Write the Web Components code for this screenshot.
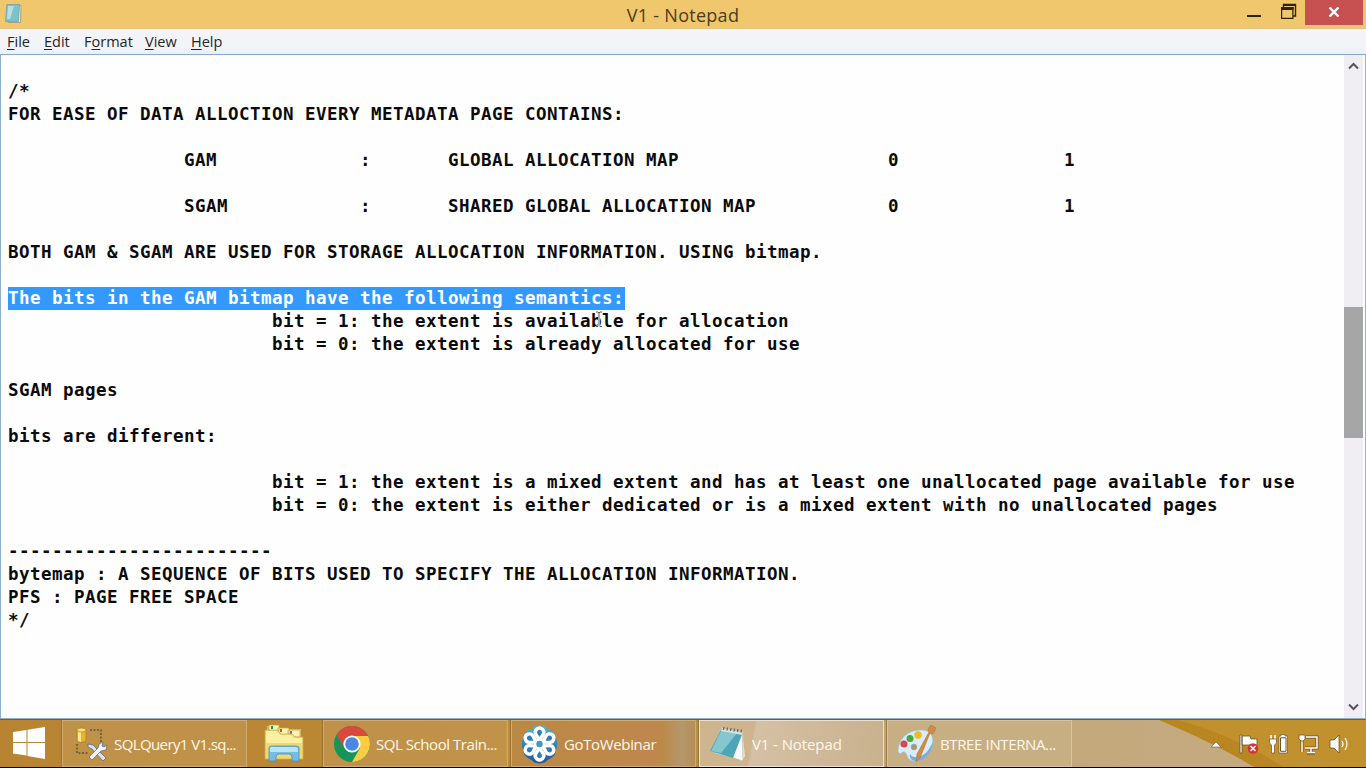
<!DOCTYPE html>
<html lang="en"><head><meta charset="utf-8"><title>V1 - Notepad</title>
<style>html,body{margin:0;height:100%;overflow:hidden;background:#000}body{font-family:"Open Sans","Noto Sans",sans-serif}</style></head>
<body>
<desktop-screen></desktop-screen>
<script>
const define=(name,html,setup)=>customElements.define(name,class extends HTMLElement{
  connectedCallback(){
    if(this.shadowRoot)return;
    this.attachShadow({mode:'open'}).innerHTML=html;
    if(setup)setup(this,this.shadowRoot);
  }
});

define('title-bar',`<style>
:host{display:grid;grid-template-columns:1fr auto 1fr;height:29px;background:#f0c76c;color:#4b3d1c;box-shadow:inset 0 -1px #e3c487}
.icon{padding:3px 0 0 3px}
.name{font-size:18px;line-height:30px;height:29px;letter-spacing:.27px;white-space:pre}
.controls{display:flex;justify-content:flex-end;padding-right:3px}
svg{display:block}
.min{width:16px;height:4px;margin:14px 18px 0 0}
.max{margin:3px 7px 0 0}
.close{width:58px;height:25px;background:#c75050}
.close svg{margin:7px auto 0}
</style>
<div class="icon"><svg width="20" height="22" viewBox="0 0 20 22"><path d="M4 2.500h14l-.5 17H5z" fill="#f4f1dd" stroke="#a5a283"/><path d="M4 1.500h12.500l-1 17H2.500z" fill="#7fc0cb" stroke="#6fa5a5" stroke-width=".8"/><path d="M5 3h6L7 16H4z" fill="#c3e6e8" opacity=".8"/></svg></div>
<div class="name"><slot></slot></div>
<div class="controls">
<svg class="min" viewBox="0 0 16 4"><path d="M1 1h14v2H1z" fill="#2c2512"/></svg>
<svg class="max" width="18" height="18" viewBox="0 0 18 18"><path d="M3.500 4V1.500h12V13H13" fill="none" stroke="#2c2512" stroke-width="1.400"/><path d="M3 1h13v2H3zM1 4h12.500v3H1z" fill="#2c2512"/><path d="M1.600 4.600h11.300v10.800H1.600z" fill="none" stroke="#2c2512" stroke-width="1.200"/></svg>
<div class="close"><svg width="12" height="10" viewBox="0 0 12 10"><path d="M1.500 .5 10.500 9.500M10.500 .5 1.500 9.500" stroke="#fff" stroke-width="2.400"/></svg></div>
</div>`);

define('menu-entry',`<style>:host{display:block;font-size:14.5px;line-height:26px;color:#252525;white-space:nowrap}
::slotted(u){text-decoration-thickness:1px;text-underline-offset:2px}</style><slot></slot>`);

define('menu-bar',`<style>:host{display:grid;grid-template-columns:37px 40px 61px 46px 60px;height:25px;padding-left:7px;background:linear-gradient(#f5f4f8,#f3f4f8 70%,#e8f0f8)}</style><slot></slot>`);

define('text-line',`<style>:host{display:block;height:23px;font:bold 17.5px/23px "DejaVu Sans Mono",monospace;letter-spacing:.464px;white-space:pre;color:#0b0b0b}
:host([selected]){color:#fff}:host([selected]) span{background:#3399ff;padding-right:1px}span{display:inline-block;height:23px}</style><span><slot></slot></span>`);

define('scroll-bar',`<style>:host{display:flex;flex-direction:column;width:19px;background:#f0eef2}
div{flex:1;display:flex;flex-direction:column;padding-top:229px}i{display:block;height:131px;background:#a6a6a6}svg{display:block}</style>
<svg width="19" height="23" viewBox="0 0 19 23"><path d="M5 13.500 9.500 9 14 13.500" fill="none" stroke="#555" stroke-width="2"/></svg>
<div><i></i></div>
<svg width="19" height="23" viewBox="0 0 19 23"><path d="M5 9.500 9.500 14 14 9.500" fill="none" stroke="#555" stroke-width="2"/></svg>`);

define('text-cursor',`<style>:host{position:absolute;left:593px;top:256px;width:10px;height:17px}svg{display:block}</style>
<svg width="10" height="17" viewBox="0 0 10 17"><path d="M2 1h2l1 1 1-1h2M5 2v12M2 15.500h2l1-1 1 1h2" fill="none" stroke="#fff" stroke-width="2"/><path d="M2 1h2l1 1 1-1h2M5 2v12M2 15.500h2l1-1 1 1h2" fill="none" stroke="#444" stroke-width=".9"/></svg>`);

const lines=['','/*','FOR EASE OF DATA ALLOCTION EVERY METADATA PAGE CONTAINS:','',
[[16,'GAM'],[32,':'],[40,'GLOBAL ALLOCATION MAP'],[80,'0'],[96,'1']],'',
[[16,'SGAM'],[32,':'],[40,'SHARED GLOBAL ALLOCATION MAP'],[80,'0'],[96,'1']],'',
'BOTH GAM & SGAM ARE USED FOR STORAGE ALLOCATION INFORMATION. USING bitmap.','',
'The bits in the GAM bitmap have the following semantics:',
[[24,'bit = 1: the extent is available for allocation']],
[[24,'bit = 0: the extent is already allocated for use']],'',
'SGAM pages','','bits are different:','',
[[24,'bit = 1: the extent is a mixed extent and has at least one unallocated page available for use']],
[[24,'bit = 0: the extent is either dedicated or is a mixed extent with no unallocated pages']],'',
'------------------------','bytemap : A SEQUENCE OF BITS USED TO SPECIFY THE ALLOCATION INFORMATION.','PFS : PAGE FREE SPACE','*/'];
define('text-editor',`<style>:host{display:flex;height:665px;background:#fefefe;border:1px solid #8db0d1;border-top-color:#83abd0;border-right-color:#77bde0;box-sizing:border-box;position:relative}
main{flex:1;padding:2px 0 0 7px;overflow:hidden}scroll-bar{margin-right:2px}</style><main></main><scroll-bar></scroll-bar><text-cursor></text-cursor>`,(h,r)=>{
  const main=r.querySelector('main');
  for(const line of lines){
    const el=document.createElement('text-line');
    el.textContent=typeof line==='string'?line:line.reduce((s,[col,t])=>s.padEnd(col)+t,'');
    if(el.textContent.startsWith('The bits'))el.setAttribute('selected','');
    main.append(el);
  }
});

const icons={
start:`<svg width="34" height="34" viewBox="0 0 34 34"><path d="M1 6 14.500 4v12H1zM15.500 3.800 33 1v15H15.500zM1 17h13.500v12.500L1 27.500zM15.500 17H33v16l-17.500-3z" fill="#fff"/></svg>`,
sql:`<svg width="34" height="34" viewBox="0 0 34 34"><path d="M14 3h11v12M1 17v9h12" fill="none" stroke="#5d5635" stroke-width="1.500" stroke-dasharray="2 1.500"/><path d="M1 3v10c1 3 8 3 9 0V3" fill="#e7b62f" stroke="#b48110" stroke-width=".7"/><path d="M2 4v10l3 1V4z" fill="#ffe88e"/><ellipse cx="5.500" cy="3" rx="4.500" ry="2" fill="#f8dd7f" stroke="#b48110" stroke-width=".7"/><path d="m12 17 5 1 13 13-3 3-11-12-4-2z" fill="#dce2e6" stroke="#656b71" stroke-width=".8"/><path d="m27 15-4 2-1 4-9 9 3 3 9-9 5-1 1-5-3 2-2-1z" fill="#f0f3f5" stroke="#65717a" stroke-width=".8"/></svg>`,
files:`<svg width="40" height="40" viewBox="0 0 40 40"><path d="M3 5V2h11l3 3h20v8H3z" fill="#ddbe65"/><path d="M5 1h10v6H5zM14 4h11v7H14zM24 6h12v7H24z" fill="#fff1b0" stroke="#bda14f" stroke-width=".7"/><path d="M8 2v3" stroke="#26945f" stroke-width="2"/><path d="M17 5v3" stroke="#b75a37" stroke-width="2"/><path d="M27 7v3" stroke="#3c83a6" stroke-width="2"/><path d="M1 6h12l4 4h11l3 3h8v22H1z" fill="#efd974" stroke="#d0ac46" stroke-width=".8"/><path d="M2 7h10l4 4h11l3 3h8v5H2z" fill="#faf0a1"/><path d="M5 37V24q0-2 3-2h24q3 0 3 2v13h-7v-4q0-3-3-3H15q-3 0-3 3v4z" fill="#76bce3" stroke="#428fbd" stroke-width=".8"/><path d="M6 24q1-2 4-1h21q3 0 3 3v2H6z" fill="#bce4f5"/></svg>`,
chrome:`<svg width="36" height="36" viewBox="0 0 36 36"><circle cx="18" cy="18" r="18" fill="#179556"/><path d="M2.400 9A18 18 0 0 1 33.600 9L34 10H18L10.500 22z" fill="#d9493d"/><path d="M18 10h16.100A18 18 0 0 1 18 36l8-14z" fill="#fccd43"/><circle cx="18" cy="18" r="8.600" fill="#fff"/><circle cx="18" cy="18" r="6.800" fill="#4b87e5"/></svg>`,
webinar:`<svg width="37" height="40" viewBox="-18.500 -20 37 40"><defs><linearGradient id="w" x2="0" y2="1"><stop stop-color="#5fb3b5"/><stop offset=".5" stop-color="#2d86b5"/><stop offset="1" stop-color="#24549a"/></linearGradient></defs><path d="M0-18.500Q6-19 8-15 16-13 16.500-6.500 19 0 16.500 6.500 16 13 8 16 6 19 0 19.500-6 19-8 16-16 13-16.500 6.500-19 0-16.500-6.500-16-13-8-15-6-19 0-18.500z" fill="url(#w)"/><g fill="#2b7fb2" stroke="#fff" stroke-width="3.400" stroke-linejoin="round">${[0,60,120,180,240,300].map(a=>`<path transform="rotate(${a})" d="M-1-5.500-3.600-9.500A4.200 4.200 0 1 1 3.600-9.500L1-5.500z"/>`).join('')}</g><circle r="4.500" fill="#3d9bc5" stroke="#fff" stroke-width="2.600"/></svg>`,
notepad:`<svg width="38" height="38" viewBox="0 0 38 38"><path d="m33 5 3 26-3 5-8-3z" fill="#e9e2ca"/><path d="m33 7 1 29-9-3-20-5 26-20z" fill="#f8fafa" stroke="#a5aca6" stroke-width=".5"/><path d="m13 3 21 4-10 26L1 26z" fill="#4da6b8"/><path d="m13 4 16 3-17 21-10-2z" fill="#a2d8de" opacity=".65"/><path d="m13 3 21 4-1 3-21-4z" fill="#d8e1d6"/><path d="m15 2-.5 3m4-2.500-.5 3m4-2.500-.5 3m4-2.500-.5 3m4-2.500-.5 3m4-2.500-.5 3" stroke="#616c60" stroke-width="1.300"/></svg>`,
paint:`<svg width="40" height="40" viewBox="0 0 40 40"><path d="M1 28C1 14 12 5 26 6c10 1 12 11 8 19-5 10-15 15-21 11-4-3-3-9-7-8-2 1-3 3-5 0z" fill="#d9edf6" stroke="#9bbcd0" stroke-width=".7"/><path d="M13 30c4 6 14 3 19-5l4-7c-1 12-10 20-18 19-3 0-6-3-5-7z" fill="#75aee0"/><circle cx="7" cy="20" r="3.500" fill="#da4258"/><circle cx="13" cy="14.500" r="3.500" fill="#45a93c"/><circle cx="21" cy="11" r="3.700" fill="#edb829"/><circle cx="17" cy="23" r="2.800" fill="#bc9258" stroke="#8aabbb"/><path d="m34 1 5 3-3 6-3-1-10 25-4 4 1-8 12-22-1-3z" fill="#d28b47" stroke="#b07439" stroke-width=".6"/></svg>`
};
define('app-icon',`<style>:host{display:block;flex:none}svg{display:block}</style>`,(h,r)=>{r.innerHTML+=icons[h.getAttribute('name')]});

define('task-button',`<style>:host{display:flex;align-items:center;box-sizing:border-box;width:185px;height:47px;border:1px solid #d0ab72;box-shadow:-1px 0 #876637a0;color:#fff8e8;background:#c49a5a90;font-size:15px;white-space:nowrap}
:host([active]){border-color:#eee0c9;background:linear-gradient(100deg,#cfb58e 0 29%,#d4c0a5 30%,#c9b18d)}
:host([tone=webinar]){background:linear-gradient(90deg,#bb8943,#bf874e 75%,#bd8949 82%,#b3976c 93%,#b58e56)}
:host([tone=paint]){background:#c8ae83;border-color:#d9c39f}
span{display:block;letter-spacing:var(--label-spacing,0)}</style><span><slot></slot></span>`,(h,r)=>{
  const icon=document.createElement('app-icon');icon.setAttribute('name',h.getAttribute('icon'));r.querySelector('span').before(icon);
});

define('system-tray',`<style>:host{display:flex;align-items:center;gap:8px;padding-right:16px;height:47px;margin-left:auto}svg{display:block}.up{margin-right:8px}</style>
<svg class="up" width="12" height="8" viewBox="0 0 12 8"><path d="m1 7 5-5 5 5z" fill="#fff" stroke="#816833" stroke-width=".7"/></svg>
<svg width="22" height="22" viewBox="0 0 22 22"><path d="M2 2h2v18H2zM4 3h8l1 3h6v6H4z" fill="#fff" stroke="#6c5426" stroke-width=".8"/><circle cx="15" cy="15.500" r="5.300" fill="#d43335"/><path d="m12.500 13 5 5m0-5-5 5" stroke="#fff" stroke-width="1.500"/></svg>
<svg width="22" height="22" viewBox="0 0 22 22"><path d="M3 2v5m4-5v5" stroke="#fff" stroke-width="1.600"/><path d="M1.500 6h7v4l-2 2v8h-3v-8l-2-2z" fill="#fff" stroke="#6c5426" stroke-width=".7"/><path d="M11 3h2V1.500h4V3h2.500v17H11z" fill="#fff" stroke="#6c5426" stroke-width=".7"/><path d="M12.500 4.800H18v13.500h-5.500z" fill="#fff" stroke="#6c5426"/></svg>
<svg width="22" height="22" viewBox="0 0 22 22"><g fill="none" stroke="#705523" stroke-width="3"><path d="M8 4h11v11H7M13 15v5M9 20h8M4 8v11"/></g><g fill="none" stroke="#fff" stroke-width="1.500"><path d="M8 4h11v11H7M13 15v4M9 19.500h8M4 8v11"/></g><path d="M1 2h6v4L5 8H3L1 6z" fill="#fff" stroke="#705523" stroke-width=".8"/></svg>
<svg width="22" height="22" viewBox="0 0 22 22"><path d="M2 7h4l5-5v18l-5-5H2z" fill="#fff" stroke="#6c5426" stroke-width=".8"/><path d="M14 8q2 3 0 6m3-9q4 6 0 12" fill="none" stroke="#fff" stroke-width="1.200"/></svg>`);

define('task-bar',`<style>:host{display:flex;height:49px;box-sizing:border-box;padding-top:1px;border-bottom:1px solid #000;background:linear-gradient(#735d39 0 1px,transparent 1px),linear-gradient(90deg,#b98431 0,#bc8935 38%,#b78b48 50%,#bea373 60%,#c4aa7e 85%,#c4aa7e);position:relative}
.gold{position:absolute;z-index:0;right:0;top:1px;width:210px;height:47px}
app-icon[name=start]{width:50px;padding:6px 0 0 12px}
system-tray{z-index:1}
</style>
<svg class="gold" viewBox="0 0 210 47"><path d="M3 0h207v47H98Q60 24 3 0z" fill="#b98621"/><path d="M22 0h188v47h-83Q84 18 22 0z" fill="#c1912e"/></svg>
<app-icon name="start"></app-icon>
<slot></slot>
<system-tray></system-tray>`);

define('desktop-screen',`<style>:host{display:block;width:1366px;height:768px;overflow:hidden}
task-button{margin-right:3px;z-index:1}
#sql{padding-left:13px;gap:4px;--label-spacing:-.6px}
#files{width:54px;padding:4px 0 0 14px;margin-right:5px}
#chrome{padding-left:10px;gap:6px;--label-spacing:-.45px}
#webinar{padding-left:9px;gap:6px;--label-spacing:-.36px}
#note{padding-left:9px;gap:5px;--label-spacing:-.1px}
#paint{padding-left:9px;gap:3px;--label-spacing:-.37px}
</style>
<title-bar>V1 - Notepad</title-bar>
<menu-bar><menu-entry><u>F</u>ile</menu-entry><menu-entry><u>E</u>dit</menu-entry><menu-entry>F<u>o</u>rmat</menu-entry><menu-entry><u>V</u>iew</menu-entry><menu-entry><u>H</u>elp</menu-entry></menu-bar>
<text-editor></text-editor>
<task-bar><task-button id="sql" icon="sql">SQLQuery1 V1.sq...</task-button>
<app-icon id="files" name="files"></app-icon>
<task-button id="chrome" icon="chrome">SQL School Train...</task-button>
<task-button id="webinar" icon="webinar" tone="webinar">GoToWebinar</task-button>
<task-button id="note" icon="notepad" active>V1 - Notepad</task-button>
<task-button id="paint" icon="paint" tone="paint">BTREE INTERNA...</task-button></task-bar>`);
</script></body></html>
